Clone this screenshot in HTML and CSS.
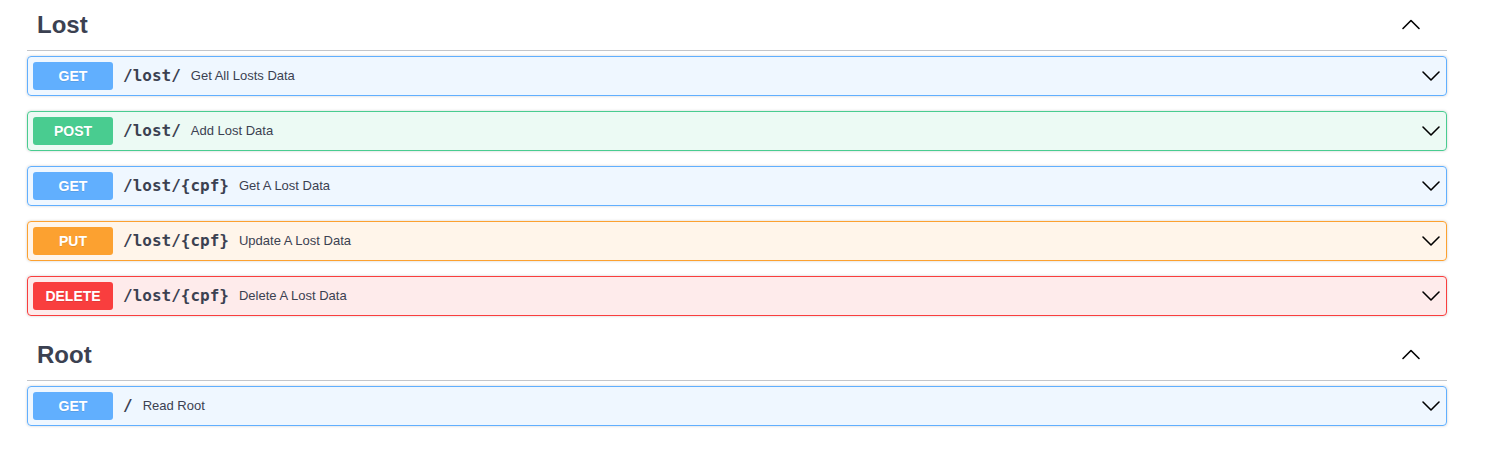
FILE: index.html
```html
<!DOCTYPE html>
<html>
<head>
<meta charset="utf-8">
<link rel="stylesheet" href="styles.css">
</head>
<body>
<div class="wrapper">
  <section class="tag-section">
    <div class="tag">
      <span class="tag-name">Lost</span>
      <svg class="arrow" width="20" height="20" viewBox="0 0 20 20"><polyline points="2,12.5 10,4.5 18,12.5"/></svg>
    </div>
    <div class="opblock get">
      <span class="method">GET</span>
      <span class="path">/lost/</span>
      <span class="desc">Get All Losts Data</span>
      <svg class="arrow" width="20" height="20" viewBox="0 0 20 20"><polyline points="2,6 10,14 18,6"/></svg>
    </div>
    <div class="opblock post">
      <span class="method">POST</span>
      <span class="path">/lost/</span>
      <span class="desc">Add Lost Data</span>
      <svg class="arrow" width="20" height="20" viewBox="0 0 20 20"><polyline points="2,6 10,14 18,6"/></svg>
    </div>
    <div class="opblock get">
      <span class="method">GET</span>
      <span class="path">/lost/{cpf}</span>
      <span class="desc">Get A Lost Data</span>
      <svg class="arrow" width="20" height="20" viewBox="0 0 20 20"><polyline points="2,6 10,14 18,6"/></svg>
    </div>
    <div class="opblock put">
      <span class="method">PUT</span>
      <span class="path">/lost/{cpf}</span>
      <span class="desc">Update A Lost Data</span>
      <svg class="arrow" width="20" height="20" viewBox="0 0 20 20"><polyline points="2,6 10,14 18,6"/></svg>
    </div>
    <div class="opblock delete">
      <span class="method">DELETE</span>
      <span class="path">/lost/{cpf}</span>
      <span class="desc">Delete A Lost Data</span>
      <svg class="arrow" width="20" height="20" viewBox="0 0 20 20"><polyline points="2,6 10,14 18,6"/></svg>
    </div>
  </section>
  <section class="tag-section">
    <div class="tag">
      <span class="tag-name">Root</span>
      <svg class="arrow" width="20" height="20" viewBox="0 0 20 20"><polyline points="2,12.5 10,4.5 18,12.5"/></svg>
    </div>
    <div class="opblock get">
      <span class="method">GET</span>
      <span class="path">/</span>
      <span class="desc">Read Root</span>
      <svg class="arrow" width="20" height="20" viewBox="0 0 20 20"><polyline points="2,6 10,14 18,6"/></svg>
    </div>
  </section>
</div>
</body>
</html>
```

FILE: styles.css
```css
html, body {
  margin: 0;
  padding: 0;
  background: #fff;
}

body {
  font-family: "Liberation Sans", Arial, sans-serif;
  color: #3b4151;
}

.wrapper {
  width: 1420px;
  margin-left: 27px;
  padding-top: 1px;
}

.tag {
  display: flex;
  align-items: center;
  box-sizing: border-box;
  height: 50px;
  padding: 0 26px 0 10px;
  margin: 0 0 5px;
  border-bottom: 1px solid rgba(59, 65, 81, 0.3);
}

.tag-name {
  flex: 1;
  font-size: 24px;
  font-weight: 700;
  color: #3b4151;
  padding-bottom: 2px;
}

.arrow {
  flex: none;
  fill: none;
  stroke: #000;
  stroke-width: 1.6;
  stroke-linecap: round;
  stroke-linejoin: round;
}

.opblock {
  display: flex;
  align-items: center;
  box-sizing: border-box;
  height: 40px;
  padding: 5px;
  margin: 0 0 15px;
  border: 1px solid;
  border-radius: 4px;
  box-shadow: 0 0 3px rgba(0, 0, 0, 0.19);
}

.method {
  flex: none;
  box-sizing: border-box;
  width: 80px;
  height: 28px;
  line-height: 28px;
  text-align: center;
  font-size: 14px;
  font-weight: 700;
  color: #fff;
  border-radius: 3px;
  text-shadow: 0 1px 0 rgba(0, 0, 0, 0.1);
}

.path {
  padding: 0 10px 2px;
  font-family: "DejaVu Sans Mono", monospace;
  font-size: 16px;
  font-weight: 700;
  color: #3b4151;
}

.desc {
  flex: 1;
  padding-bottom: 2px;
  font-size: 13px;
  color: #3b4151;
}

.get { background: rgba(97, 175, 254, 0.1); border-color: #61affe; }
.get .method { background: #61affe; }

.post { background: rgba(73, 204, 144, 0.1); border-color: #49cc90; }
.post .method { background: #49cc90; }

.put { background: rgba(252, 161, 48, 0.1); border-color: #fca130; }
.put .method { background: #fca130; }

.delete { background: rgba(249, 62, 62, 0.1); border-color: #f93e3e; }
.delete .method { background: #f93e3e; }
```
